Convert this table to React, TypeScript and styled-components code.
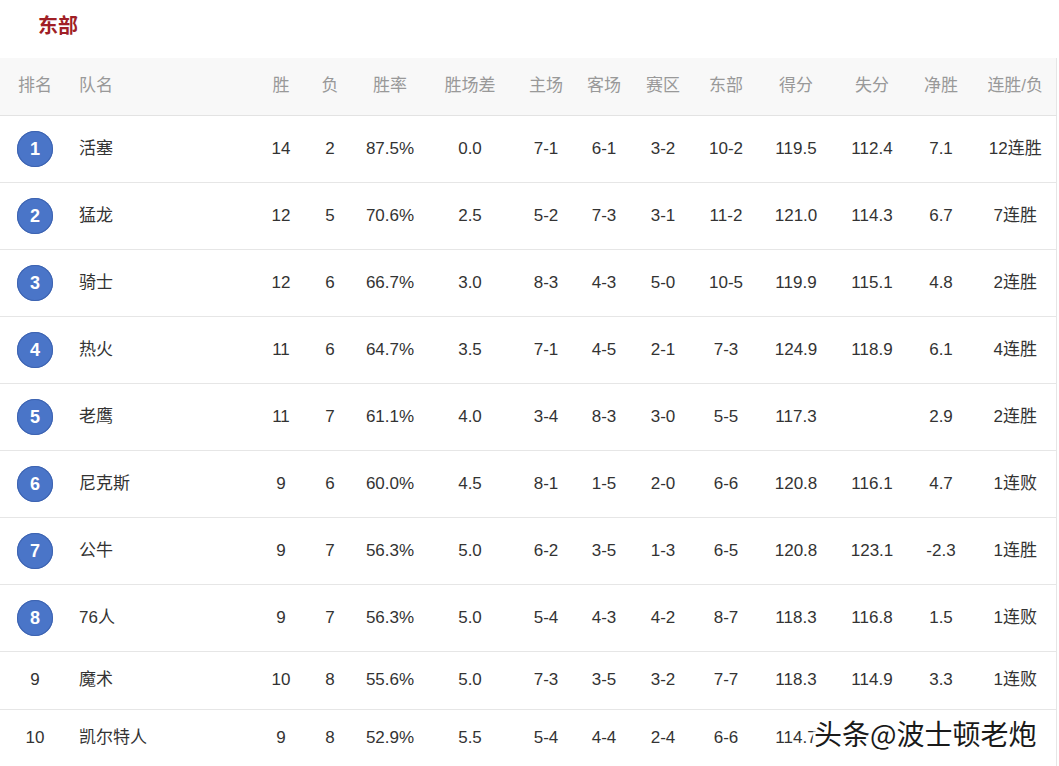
import React from "react";
import styled, { createGlobalStyle } from "styled-components";

const Global = createGlobalStyle`
  html, body { margin: 0; padding: 0; background: #fff; }
  body { font-family: "Liberation Sans", "Noto Sans CJK SC", sans-serif; }
`;

const Page = styled.div`
  position: relative;
  width: 1059px;
  height: 766px;
  overflow: hidden;
  background: #fff;
`;

const Title = styled.div`
  height: 58px;
  box-sizing: border-box;
  padding: 12px 0 0 38px;
  font-size: 20px;
  font-weight: bold;
  color: #a01f26;
  line-height: 26px;
  font-family: "Noto Sans CJK SC", sans-serif;
`;

const Table = styled.table`
  width: 1056px;
  border-collapse: collapse;
  table-layout: fixed;
  border-right: 1px solid #e6e6e6;
`;

const HeadRow = styled.tr`
  background: #f8f8f8;
  height: 57px;
  border-bottom: 1px solid #e3e3e3;
`;

const Th = styled.th<{ $left?: boolean; $pad?: number }>`
  font-weight: normal;
  font-size: 17px;
  line-height: 20px;
  color: #999;
  padding: 0 0 1px ${(p) => p.$pad ?? 0}px;
  text-align: ${(p) => (p.$left ? "left" : "center")};
  white-space: nowrap;
`;

const Row = styled.tr<{ $tall: boolean }>`
  height: ${(p) => (p.$tall ? 67 : 58)}px;
  border-bottom: 1px solid #e6e6e6;
`;

const Td = styled.td<{ $left?: boolean; $pad?: number }>`
  font-size: 17px;
  line-height: 20px;
  color: #333;
  padding: 0 0 0 ${(p) => p.$pad ?? 0}px;
  text-align: ${(p) => (p.$left ? "left" : "center")};
  white-space: nowrap;
`;

const Badge = styled.span`
  display: inline-flex;
  align-items: center;
  justify-content: center;
  width: 36px;
  height: 36px;
  border-radius: 50%;
  background: #4a75c8;
  box-shadow: inset 0 0 0 1px #3d63b0;
  color: #fff;
  font-weight: bold;
  font-size: 18px;
  vertical-align: middle;
`;

const Watermark = styled.div`
  position: absolute;
  left: 814px;
  top: 713px;
  font-size: 28px;
  color: #1a1a1a;
  font-family: "Noto Sans CJK SC", sans-serif;
  -webkit-text-stroke: 5px #fff;
  paint-order: stroke fill;
  white-space: nowrap;
`;

const widths = [70, 185, 52, 46, 74, 86, 66, 50, 68, 58, 82, 70, 68, 81];
const heads = ["排名", "队名", "胜", "负", "胜率", "胜场差", "主场", "客场", "赛区", "东部", "得分", "失分", "净胜", "连胜/负"];

const data: string[][] = [
  ["1", "活塞", "14", "2", "87.5%", "0.0", "7-1", "6-1", "3-2", "10-2", "119.5", "112.4", "7.1", "12连胜"],
  ["2", "猛龙", "12", "5", "70.6%", "2.5", "5-2", "7-3", "3-1", "11-2", "121.0", "114.3", "6.7", "7连胜"],
  ["3", "骑士", "12", "6", "66.7%", "3.0", "8-3", "4-3", "5-0", "10-5", "119.9", "115.1", "4.8", "2连胜"],
  ["4", "热火", "11", "6", "64.7%", "3.5", "7-1", "4-5", "2-1", "7-3", "124.9", "118.9", "6.1", "4连胜"],
  ["5", "老鹰", "11", "7", "61.1%", "4.0", "3-4", "8-3", "3-0", "5-5", "117.3", "", "2.9", "2连胜"],
  ["6", "尼克斯", "9", "6", "60.0%", "4.5", "8-1", "1-5", "2-0", "6-6", "120.8", "116.1", "4.7", "1连败"],
  ["7", "公牛", "9", "7", "56.3%", "5.0", "6-2", "3-5", "1-3", "6-5", "120.8", "123.1", "-2.3", "1连胜"],
  ["8", "76人", "9", "7", "56.3%", "5.0", "5-4", "4-3", "4-2", "8-7", "118.3", "116.8", "1.5", "1连败"],
  ["9", "魔术", "10", "8", "55.6%", "5.0", "7-3", "3-5", "3-2", "7-7", "118.3", "114.9", "3.3", "1连败"],
  ["10", "凯尔特人", "9", "8", "52.9%", "5.5", "5-4", "4-4", "2-4", "6-6", "114.7", "", "", ""],
];

export default function App() {
  return (
    <Page>
      <Global />
      <Title>东部</Title>
      <Table>
        <colgroup>
          {widths.map((w, i) => (
            <col key={i} style={{ width: w }} />
          ))}
        </colgroup>
        <thead>
          <HeadRow>
            {heads.map((h, i) => (
              <Th key={i} $left={i === 1} $pad={i === 1 ? 9 : 0}>
                {h}
              </Th>
            ))}
          </HeadRow>
        </thead>
        <tbody>
          {data.map((r, ri) => {
            const tall = ri < 8;
            return (
              <Row key={ri} $tall={tall}>
                {r.map((c, ci) => (
                  <Td key={ci} $left={ci === 1} $pad={ci === 1 ? 9 : 0}>
                    {ci === 0 && tall ? <Badge>{c}</Badge> : c}
                  </Td>
                ))}
              </Row>
            );
          })}
        </tbody>
      </Table>
      <Watermark>头条@波士顿老炮</Watermark>
    </Page>
  );
}
